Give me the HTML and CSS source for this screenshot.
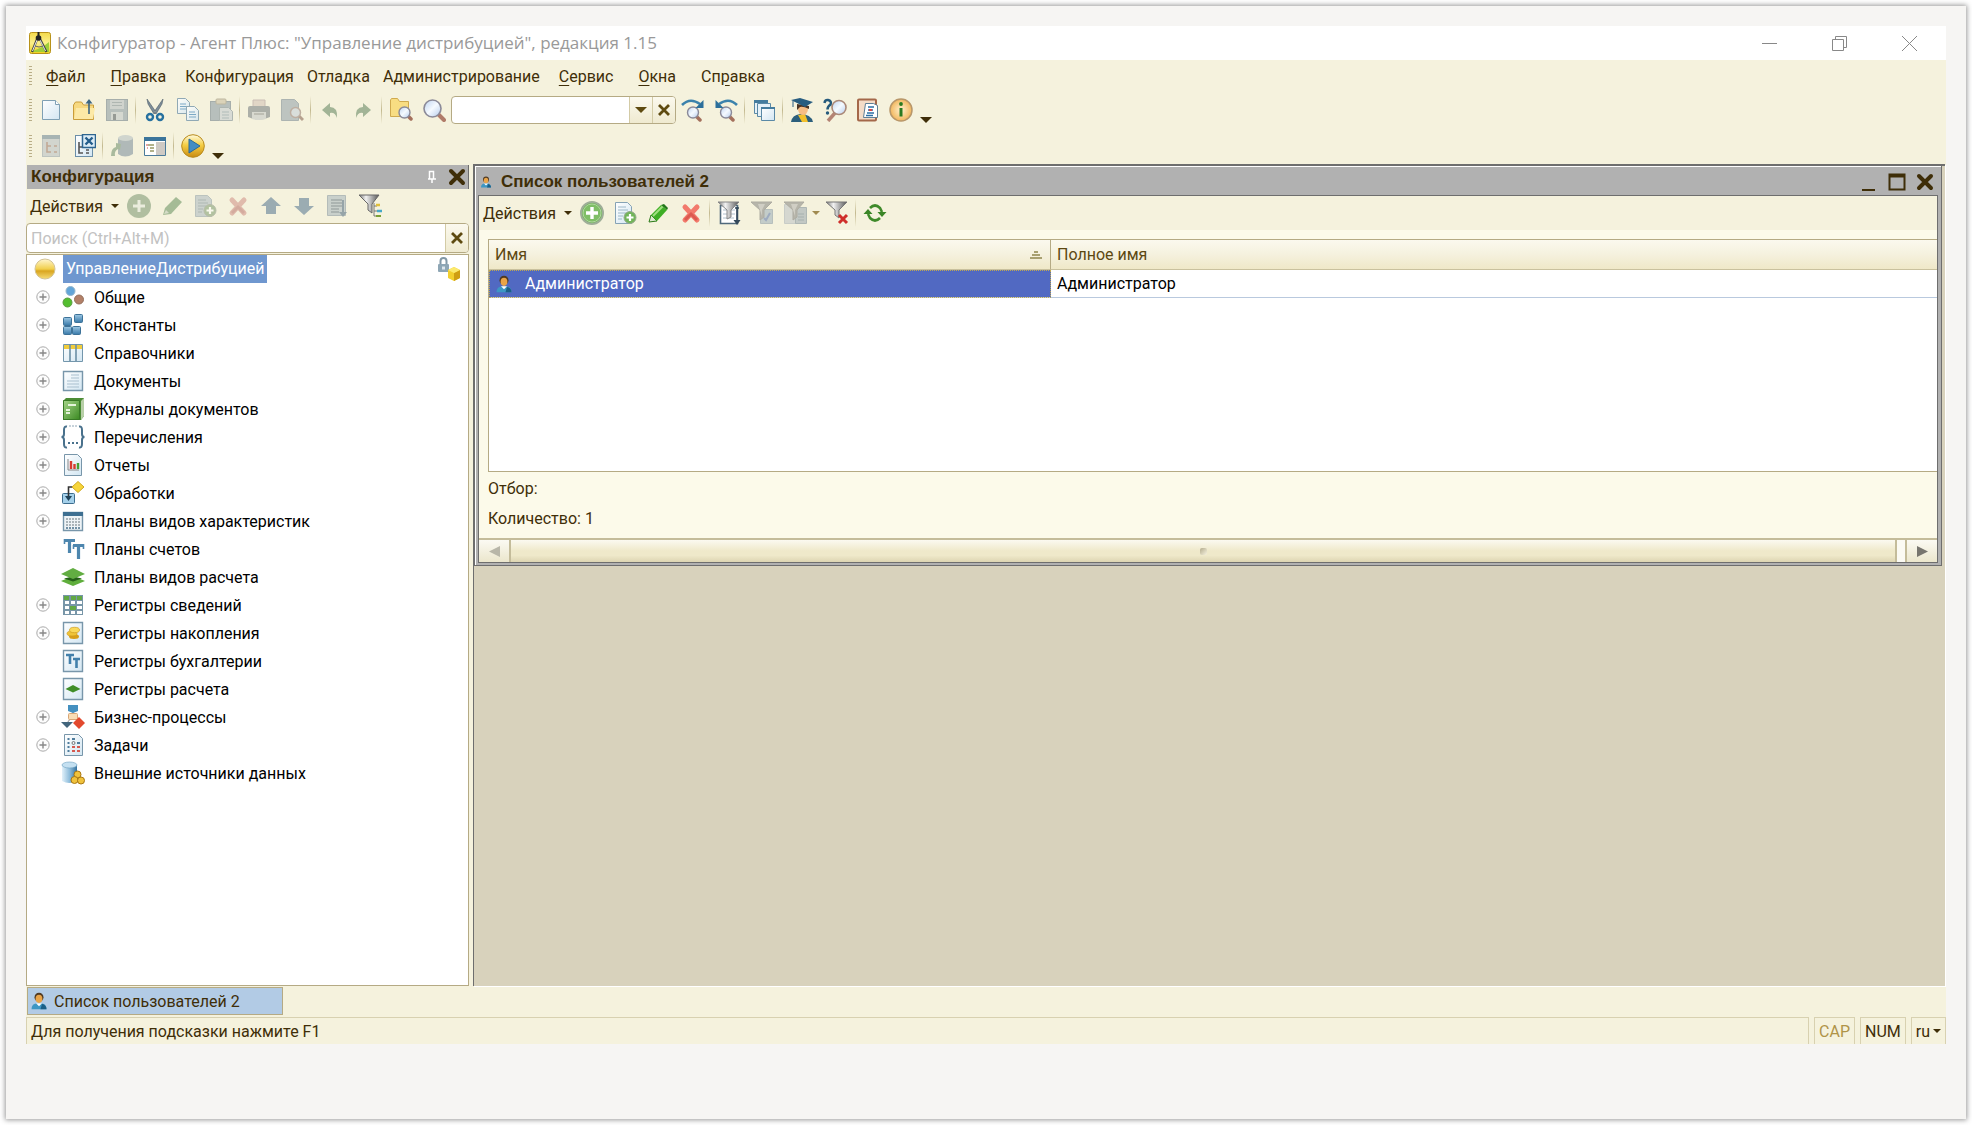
FILE: index.html
```html
<!DOCTYPE html>
<html lang="ru">
<head>
<meta charset="utf-8">
<meta name="viewport" content="width=device-width, initial-scale=1">
<title>Конфигуратор - Агент Плюс: "Управление дистрибуцией", редакция 1.15</title>
<link rel="stylesheet" href="styles.css">
</head>
<body>
<svg class="sprite" aria-hidden="true">
<defs>
<linearGradient id="gold" x1="0" y1="0" x2="0" y2="1"><stop offset="0" stop-color="#fffbe0"/><stop offset=".45" stop-color="#f5cf45"/><stop offset="1" stop-color="#c98b12"/></linearGradient>
<linearGradient id="appbg" x1="0" y1="0" x2="0" y2="1"><stop offset="0" stop-color="#f3d94a"/><stop offset=".5" stop-color="#fbf08a"/><stop offset="1" stop-color="#f0d020"/></linearGradient>
<linearGradient id="ball" x1="0" y1="0" x2="0" y2="1"><stop offset="0" stop-color="#fff6d0"/><stop offset=".5" stop-color="#f1cf4c"/><stop offset=".6" stop-color="#d9a520"/><stop offset="1" stop-color="#f6dc75"/></linearGradient>
<linearGradient id="page" x1="0" y1="0" x2="1" y2="1"><stop offset="0" stop-color="#fff"/><stop offset="1" stop-color="#d3e6f2"/></linearGradient>
<linearGradient id="blue" x1="0" y1="0" x2="0" y2="1"><stop offset="0" stop-color="#9dc8e4"/><stop offset="1" stop-color="#3778a8"/></linearGradient>
<linearGradient id="cyl" x1="0" y1="0" x2="1" y2="0"><stop offset="0" stop-color="#e2f1fa"/><stop offset=".5" stop-color="#8fbddb"/><stop offset="1" stop-color="#34729f"/></linearGradient>
<linearGradient id="green" x1="0" y1="0" x2="1" y2="1"><stop offset="0" stop-color="#a5d488"/><stop offset="1" stop-color="#3b8a22"/></linearGradient>
<linearGradient id="metal" x1="0" y1="0" x2="1" y2="0"><stop offset="0" stop-color="#777"/><stop offset=".35" stop-color="#f2f2f2"/><stop offset="1" stop-color="#555"/></linearGradient>
<linearGradient id="lens" x1="0" y1="0" x2="1" y2="1"><stop offset="0" stop-color="#bcd2f0"/><stop offset=".5" stop-color="#f5faff"/><stop offset="1" stop-color="#b4cbec"/></linearGradient>
<radialGradient id="info"><stop offset="0" stop-color="#fff2cf"/><stop offset="1" stop-color="#f2b65c"/></radialGradient>
</defs>
<symbol id="app" viewBox="0 0 24 24"><rect x="1.500" y="1.500" width="21" height="21" rx="2" fill="url(#appbg)" stroke="#b8921a"/><path d="M3 20C9 19 15 16 21 11v10H3z" fill="#9fce3a"/><path d="M9.500 7L4 21M11.500 7l7 14" stroke="#444" stroke-width="2.200"/><path d="M9.500 8L4.500 20M12 9l5.500 11" stroke="#eee"/><path d="M7 15q4 2 8 0" stroke="#666" fill="none"/><path d="M10.500 1v5" stroke="#222" stroke-width="2"/><circle cx="10.500" cy="7" r="2.800" fill="#222"/></symbol>
<symbol id="new" viewBox="0 0 24 24"><path d="M3.500 2.500h13l4 4v15h-17z" fill="url(#page)" stroke="#7fa0b4"/><path d="M16.500 2.500v4h4" fill="#fff" stroke="#7fa0b4"/></symbol>
<symbol id="open" viewBox="0 0 24 24"><path d="M1.500 21.500V7l2-3h6l2 3h10v14.500z" fill="#f7d980" stroke="#c99d3a"/><path d="M2 21L4 10h19l-2 11z" fill="#fce9a6"/><path d="M17 16V3" stroke="#3b6580" stroke-width="1.600"/><path d="M13.500 5.500L17 1l3.500 4.500z" fill="#3b6580"/></symbol>
<symbol id="save" viewBox="0 0 24 24"><rect x="1.500" y="1.500" width="21" height="21" fill="#6f8ea4" stroke="#4d6d85"/><path d="M5 2h14v9H5z" fill="#a4b6c4"/><path d="M7 4.500h10M7 7.500h10" stroke="#5f7b90"/><path d="M6 14h12v8H6z" fill="#b0bec8"/><path d="M8 16h3v6H8z" fill="#345"/></symbol>
<symbol id="cut" viewBox="0 0 24 24"><path d="M4 1l9 13-2 2L5 6zM20 1l-9 13 2 2 6-10z" fill="#7e8d98" stroke="#4e5e6a" stroke-width=".600"/><circle cx="7" cy="19" r="3" fill="none" stroke="#27719f" stroke-width="2.400"/><circle cx="17" cy="19" r="3" fill="none" stroke="#27719f" stroke-width="2.400"/></symbol>
<symbol id="copy" viewBox="0 0 24 24"><path d="M1.500.5h8l4 4v11h-12z" fill="url(#page)" stroke="#7797ac"/><path d="M4 6h6M4 8.500h7M4 11h7" stroke="#5f97c0"/><path d="M10.500 8.500h8l4 4v10h-12z" fill="url(#page)" stroke="#7797ac"/><path d="M13 14h6M13 16.500h7M13 19h7" stroke="#5f97c0"/></symbol>
<symbol id="paste" viewBox="0 0 24 24"><rect x="1.500" y="3.500" width="20" height="19" fill="#6f8ea6" stroke="#4c6c85"/><rect x="7" y="1" width="10" height="5" rx="1" fill="#c9b37f" stroke="#8b7a50"/><path d="M10.500 9.500h9l4 4v9h-13z" fill="#b5c6d3" stroke="#5d7b90"/><path d="M13 14h7M13 17h7M13 20h7" stroke="#5f87a5"/></symbol>
<symbol id="print" viewBox="0 0 24 24"><path d="M6 2h12v8H6z" fill="#d8b8a4" stroke="#a88"/><path d="M1 10q0-2 2-2h18q2 0 2 2v9q-11 5-22 0z" fill="#5f6d78"/><path d="M5 14h14v7q-7 2-14 0z" fill="#b8c0c5"/><path d="M7 16h10" stroke="#555"/></symbol>
<symbol id="preview" viewBox="0 0 24 24"><path d="M1.500 1.500h13l4 4v17h-17z" fill="#7c98ac" stroke="#587890"/><path d="M19 18l4 4" stroke="#8a4a30" stroke-width="3"/><circle cx="15.500" cy="14.500" r="5" fill="#b5cbe2" stroke="#96685c" stroke-width="1.500"/></symbol>
<symbol id="undo" viewBox="0 0 24 24"><path d="M4 12l8-7v4q8 0 7 11-2-6-7-5v4z" fill="#3c7d3c"/></symbol>
<symbol id="redo" viewBox="0 0 24 24"><path d="M20 12l-8-7v4q-8 0-7 11 2-6 7-5v4z" fill="#3c7d3c"/></symbol>
<symbol id="mag" viewBox="0 0 24 24"><path d="M16 16l6 6" stroke="#b07b68" stroke-width="4" stroke-linecap="round"/><circle cx="10.500" cy="10.500" r="8.500" fill="url(#lens)" stroke="#8b8a98" stroke-width="1.600"/></symbol>
<symbol id="findfile" viewBox="0 0 24 24"><path d="M1.500 18.500V2l1-1.500h6l2 3h9v15z" fill="#f8dd82" stroke="#d0aa4e"/><path d="M19 18l3 3" stroke="#a4705c" stroke-width="3.500" stroke-linecap="round"/><circle cx="15.500" cy="14.500" r="5.500" fill="url(#lens)" stroke="#8b8a98" stroke-width="1.400"/></symbol>
<symbol id="next" viewBox="0 0 24 24"><path d="M15 18l4 4" stroke="#a4705c" stroke-width="3.500" stroke-linecap="round"/><circle cx="12" cy="14.500" r="5.500" fill="url(#lens)" stroke="#8b8a98" stroke-width="1.400"/><path d="M1 7Q9-1 19 6" fill="none" stroke="#3b82ac" stroke-width="2.600"/><path d="M22.500 2v8h-8z" fill="#2c6f9b"/></symbol>
<symbol id="prev" viewBox="0 0 24 24"><path d="M15 18l4 4" stroke="#a4705c" stroke-width="3.500" stroke-linecap="round"/><circle cx="12" cy="14.500" r="5.500" fill="url(#lens)" stroke="#8b8a98" stroke-width="1.400"/><path d="M23 7Q15-1 5 6" fill="none" stroke="#3b82ac" stroke-width="2.600"/><path d="M1.500 2v8h8z" fill="#2c6f9b"/></symbol>
<symbol id="wins" viewBox="0 0 24 24"><g fill="#e6f1f8" stroke="#5a89a6"><path d="M2.500 2.500h13v13h-13z"/><path d="M5.500 5.500h13v13h-13z"/><path d="M9.500 9.500h13v13h-13z" fill="url(#page)"/></g><path d="M2 2h14v3H2zM9 9h14v2H9z" fill="#457c9e"/></symbol>
<symbol id="grad" viewBox="0 0 24 24"><path d="M1 24q1-7 9-8 11 0 13 8z" fill="#2c5f7c"/><path d="M8 17l4 7h6l-3-8z" fill="#f2c02c"/><ellipse cx="13" cy="11" rx="5" ry="6" fill="#f6bd85"/><path d="M7 12V6l12 2v3q-6-3-9-2z" fill="#4a3425"/><path d="M1 2L10 0l13 4-8 5z" fill="#285d80"/><path d="M3 3v6" stroke="#285d80"/></symbol>
<symbol id="helpfind" viewBox="0 0 24 24"><path d="M12 15l-7 8" stroke="#b48474" stroke-width="3.500"/><circle cx="16" cy="9.500" r="7" fill="url(#lens)" stroke="#aa8878" stroke-width="1.600"/><path d="M1.500 5Q2 1.500 5 2q4 1 2.500 4.500-3 2-3 5" fill="none" stroke="#255a7c" stroke-width="2.500"/><circle cx="4.500" cy="15" r="1.700" fill="#255a7c"/></symbol>
<symbol id="book" viewBox="0 0 24 24"><rect x="2" y="1.500" width="18" height="21" rx="1" fill="#f4dcc8" stroke="#a4684a" stroke-width="2"/><path d="M9.500 5.500h8l4 2v12h-14z" fill="#fff" stroke="#5f7f95"/><path d="M12 9h6M12 12h5M11 15h7M10 17.500h7" stroke="#2d6fa5" stroke-width="1.500"/><path d="M13 12h3" stroke="#d44" stroke-width="2"/></symbol>
<symbol id="info-i" viewBox="0 0 24 24"><circle cx="12" cy="12" r="11" fill="url(#info)" stroke="#b8976a" stroke-width="1.500"/><path d="M12 10v8.500" stroke="#2b7a20" stroke-width="3" fill="none"/><circle cx="12" cy="6" r="1.900" fill="#2b7a20"/></symbol>
<symbol id="cfg" viewBox="0 0 24 24"><rect x="3.500" y="1.500" width="17" height="21" fill="#a9b9c4" stroke="#7c98aa"/><path d="M3 1h18v4H3z" fill="#4a7898"/><path d="M8 8v10h4M8 12h4M15 12h3M15 18h3" stroke="#a85a3a" stroke-width="1.600" fill="none"/></symbol>
<symbol id="cfgx" viewBox="0 0 24 24"><rect x="3.500" y="1.500" width="17" height="21" fill="url(#page)" stroke="#6c8fa8"/><path d="M7 8v11h4M7 13h4M14 16h3M14 19h3" stroke="#555" stroke-width="1.600" fill="none"/><path d="M10.500.5h13v13h-13z" fill="#dcecf6" stroke="#2e6590" stroke-width="1.500"/><path d="M13.500 3.500l7 7M20.500 3.500l-7 7" stroke="#235d8b" stroke-width="2.400"/></symbol>
<symbol id="db" viewBox="0 0 24 24"><path d="M8 4v16q7 5 15 0V4z" fill="#5e83a0"/><ellipse cx="15.500" cy="4" rx="7.500" ry="3" fill="#a5b9c6"/><path d="M1 22q0-8 5-9V9l5 1-1 6-2-1q-4 2-3 7z" fill="#4b8a4b"/></symbol>
<symbol id="panel" viewBox="0 0 24 24"><path d="M1.500 3.500h21v18h-21z" fill="#fff" stroke="#4b7b9b"/><path d="M1 3h22v4H1z" fill="#3b749b"/><path d="M13 8h9v13h-9z" fill="#cfcac4"/><path d="M5 11h6M7 14h4M7 17h4" stroke="#996" stroke-width="1.500"/><path d="M3 11h2M4 14h1" stroke="#c44"/></symbol>
<symbol id="play" viewBox="0 0 24 24"><circle cx="12" cy="12" r="11.300" fill="url(#gold)" stroke="#b88a1c"/><path d="M8 5l11 7-11 7z" fill="#438dc4" stroke="#2a6a99"/></symbol>
<symbol id="plus" viewBox="0 0 24 24"><circle cx="12" cy="12" r="11" fill="#6db356" stroke="#9fae98" stroke-width="2"/><circle cx="12" cy="12" r="9" fill="#7fbe66" stroke="#c0e0b0" stroke-width=".800"/><path d="M12 6v12M6 12h12" stroke="#fff" stroke-width="3.400"/></symbol>
<symbol id="pen" viewBox="0 0 24 24"><path d="M3 21l2-7 6 6z" fill="#dfe8d0" stroke="#2b7a18"/><path d="M5 14L15 4l6 5-10 11z" fill="#3fae25"/><path d="M7 15L17 5" stroke="#a0e080" stroke-width="2"/><path d="M15 4l3-1 4 4-1 2z" fill="#23781a"/></symbol>
<symbol id="pen-off" viewBox="0 0 24 24"><path d="M3 21l2-7L16 3l6 5-11 12z" fill="#3f8e35"/><path d="M4 20l2-4 3 3z" fill="#b0c8a8"/></symbol>
<symbol id="plus-off" viewBox="0 0 24 24"><circle cx="12" cy="12" r="12" fill="#5d9150"/><path d="M12 6v12M6 12h12" stroke="#dce8d8" stroke-width="3"/></symbol>
<symbol id="addcopy" viewBox="0 0 24 24"><path d="M2.500 1.500h12l4 4v17h-16z" fill="url(#page)" stroke="#86a3b5"/><path d="M5 6h8M5 9h10M5 12h8M5 15h5M5 18h4" stroke="#9db8c8"/><circle cx="17" cy="16.500" r="6" fill="#72b559" stroke="#94a88c"/><path d="M17 13v7M13.500 16.500h7" stroke="#fff" stroke-width="2.200"/></symbol>
<symbol id="addcopy-off" viewBox="0 0 24 24"><path d="M2.500 1.500h12l4 4v17h-16z" fill="#9ab4c6" stroke="#7895a8"/><path d="M5 6h8M5 9h10M5 12h8M5 15h5M5 18h4" stroke="#5d7e94"/><circle cx="17" cy="16.500" r="6" fill="#5f9a4a" stroke="#748a6c"/><path d="M17 13v7M13.500 16.500h7" stroke="#fff" stroke-width="2.200"/></symbol>
<symbol id="del" viewBox="0 0 24 24"><path d="M6 6l12 13M18 6L6 19" stroke="#f27a6c" stroke-width="5" stroke-linecap="round"/><path d="M6 19l6-6 6 6" stroke="#dc5a50" fill="none" stroke-width="3"/></symbol>
<symbol id="up" viewBox="0 0 24 24"><path d="M12 3l10 9h-5v8H7v-8H2z" fill="#2d6aa0"/></symbol>
<symbol id="down" viewBox="0 0 24 24"><path d="M12 21L2 12h5V4h10v8h5z" fill="#2d6aa0"/></symbol>
<symbol id="sortl" viewBox="0 0 24 24"><path d="M2.500 1.500h18v20h-18z" fill="#94afc2" stroke="#6788a0"/><path d="M6 6h11M6 9h11M6 12h11M6 15h8M6 18h8" stroke="#44687f" stroke-width="1.500"/><path d="M18 6v12" stroke="#245a88" stroke-width="2"/><path d="M14 18h8l-4 5z" fill="#245a88"/></symbol>
<symbol id="ftree" viewBox="0 0 24 24"><path d="M1 1h20l-7 9v9l-4-3v-6z" fill="url(#metal)" stroke="#666"/><path d="M16 9v13h3M16 12h3M16 17h3" stroke="#777" fill="none"/><path d="M18 11h4" stroke="#e0bf3a" stroke-width="2.500"/><path d="M19 17h5" stroke="#45a8c8" stroke-width="2.500"/><path d="M18 22h5" stroke="#7a9f35" stroke-width="2"/></symbol>
<symbol id="fsort" viewBox="0 0 24 24"><path d="M3.500 4.500h17v18h-17z" fill="#fff" stroke="#50697b" stroke-width="1.600"/><path d="M6 9h12M6 13h12M6 17h11" stroke="#b0c0cc"/><path d="M1 1h21l-8 8v7l-4 2V9z" fill="url(#metal)" stroke="#888"/><path d="M20 6v14M18 7h4" stroke="#33485a" stroke-width="1.600"/><path d="M16.500 19h7l-3.500 5z" fill="#33485a"/></symbol>
<symbol id="fcheck" viewBox="0 0 24 24"><path d="M10.500 8.500h12v14h-12z" fill="#87a7c0" stroke="#6d8fa8"/><path d="M14 17l2 2 4-7" stroke="#36c" stroke-width="2" fill="none"/><path d="M1 1h21l-8 8v7l-4 3V9z" fill="#777" stroke="#666"/><path d="M8 3h7l-3 6v6z" fill="#aaa"/></symbol>
<symbol id="flist" viewBox="0 0 24 24"><path d="M1.500 3.500h13v19h-13z" fill="#b0bcc8" stroke="#94a8b8"/><path d="M12.500 6.500h11v16h-11z" fill="#86a0b4" stroke="#5c7f98"/><path d="M15 13h6M15 16h6M15 19h6" stroke="#48708e"/><path d="M1 1h20l-7 8v7l-4 3V9z" fill="#777" stroke="#666"/><path d="M8 3h7l-3 6v6z" fill="#aaa"/></symbol>
<symbol id="fclear" viewBox="0 0 24 24"><path d="M1 1h21l-8 8v8l-4-3V9z" fill="url(#metal)" stroke="#777"/><path d="M14 14l8 8M22 14l-8 8" stroke="#cf2f2a" stroke-width="3"/></symbol>
<symbol id="refresh" viewBox="0 0 24 24"><path d="M7 7q5-5 10 0l2 4M17 17q-5 5-10 0l-2-4" fill="none" stroke="#3f8a2a" stroke-width="2.600"/><path d="M14.500 11h9L19 16zM.5 13h9L5 8z" fill="#3a8526"/></symbol>
<symbol id="user" viewBox="0 0 24 24"><path d="M2 23q0-8 8-8h4q8 0 8 8z" fill="#3d97c4"/><path d="M14 23l2-7q6 1 6 7z" fill="#1b5f86"/><path d="M8 15l4 4 4-4z" fill="#fff"/><circle cx="12" cy="7" r="6" fill="#503a22"/><ellipse cx="12" cy="9" rx="4.500" ry="5.500" fill="#e9a448"/></symbol>
<symbol id="root" viewBox="0 0 24 24"><circle cx="12" cy="12" r="10" fill="url(#ball)" stroke="#d3c394"/></symbol>
<symbol id="lock" viewBox="0 0 24 24"><path d="M4.500 8V4q0-3 3-3t3 3v4" fill="none" stroke="#8298a6" stroke-width="2"/><rect x="2" y="7" width="11" height="8" rx="1" fill="#8ea6b5"/><path d="M6 9.500h3v3H6z" fill="#dde6ec"/><path d="M12 13l6-3 6 3v8l-6 3-6-3z" fill="#f2cf2e"/><path d="M18 16l6-3v8l-6 3z" fill="#cf9e12"/><path d="M12 13l6-3 6 3-6 3z" fill="#fbe96e"/></symbol>
<symbol id="exp" viewBox="0 0 14 14"><circle cx="7" cy="7" r="6.200" fill="#fcfcfc" stroke="#aaa"/><path d="M7 3.500v7M3.500 7h7" stroke="#888" stroke-width="1.400"/></symbol>
<symbol id="common" viewBox="0 0 24 24"><circle cx="9.500" cy="6" r="4.500" fill="#62a5d8" stroke="#92b4cc"/><circle cx="6.500" cy="17.500" r="4.500" fill="#53be2f" stroke="#5b9b40"/><circle cx="18" cy="14.500" r="4.500" fill="#b38068" stroke="#94705c"/></symbol>
<symbol id="const" viewBox="0 0 24 24"><g fill="url(#blue)" stroke="#3d7298"><rect x="2.500" y="4.500" width="8" height="8" rx="1"/><rect x="13.500" y="1.500" width="8" height="8" rx="1"/><rect x="2.500" y="13.500" width="8" height="8" rx="1"/><rect x="11.500" y="13.500" width="8" height="8" rx="1"/></g></symbol>
<symbol id="refs" viewBox="0 0 24 24"><path d="M2.500 3.500h19v17h-19z" fill="url(#page)" stroke="#7396ac"/><path d="M3 4h18v4H3z" fill="#f0cc3c"/><path d="M9 3v17M15 3v17" stroke="#6c8fa5" stroke-width="1.600"/></symbol>
<symbol id="doc" viewBox="0 0 24 24"><path d="M2.500 2.500h19v19h-19z" fill="url(#page)" stroke="#7896aa" stroke-width="1.400"/><path d="M10 6h8M10 9h8M6 12h12M6 15h12M6 18h12" stroke="#a9bfce"/></symbol>
<symbol id="journal" viewBox="0 0 24 24"><path d="M5 1h18v18l-3 4H2V4z" fill="#4c8c35"/><path d="M20 4l3-3v18l-3 4z" fill="#b8cfa8"/><path d="M2.500 3.500h16v19h-16z" fill="url(#green)" stroke="#387a25"/><path d="M7 8h8M5 13h4M5 16h4" stroke="#e4f4da" stroke-width="2"/></symbol>
<symbol id="enum" viewBox="0 0 24 24"><path d="M6 1.500Q3 1 3 5v4q0 3-2.500 3 2.500 0 2.500 3v4q0 4 3 3.500M18 1.500q3-.5 3 3.500v4q0 3 2.500 3-2.500 0-2.500 3v4q0 4-3 3.500" fill="none" stroke="#49718c" stroke-width="2"/><path d="M8 1h8" stroke="#8ea6b6" stroke-dasharray="2 1"/><path d="M7 18h2M11 18h2M15 18h2" stroke="#49718c" stroke-width="2"/></symbol>
<symbol id="report" viewBox="0 0 24 24"><path d="M3.500 1.500h13l4 4v17h-17z" fill="url(#page)" stroke="#7896aa"/><path d="M7 6v11h11" fill="none" stroke="#888"/><path d="M10 16V8M13.500 16v-5" stroke="#d83a30" stroke-width="2.400"/><path d="M17 16v-6" stroke="#47a035" stroke-width="2.400"/></symbol>
<symbol id="proc" viewBox="0 0 24 24"><rect x="1.500" y="12.500" width="12" height="10" rx="1" fill="#a4d0ea" stroke="#3d6d8e"/><path d="M7.500 18V6H12" fill="none" stroke="#333" stroke-width="1.600"/><path d="M4 15h7l-3.500 5z" fill="#1f4258"/><path d="M17 .5l6 5.500-6 5.500L11 6z" fill="#f7d53b" stroke="#cfa922"/></symbol>
<symbol id="pvh" viewBox="0 0 24 24"><path d="M2.500 3.500h19v18h-19z" fill="#eef3f6" stroke="#7896aa" stroke-width="1.400"/><path d="M2 3h20v4H2z" fill="#3e6f91"/><path d="M6 9v8M9 9v8M12 9v8M15 9v8M18 9v8" stroke="#8f9aa0" stroke-width="1.400" stroke-dasharray="2 1"/><path d="M5 19h14" stroke="#49718c" stroke-width="1.500" stroke-dasharray="2 1"/></symbol>
<symbol id="acc" viewBox="0 0 24 24"><path d="M3 3.500h11M8.500 3v13M12 8.500h11M17.500 8v14" stroke="#4d86ae" stroke-width="3.200" fill="none"/><path d="M3.500 2v5M22.500 7v5M12.500 8v4" stroke="#4d86ae" stroke-width="1.600"/></symbol>
<symbol id="layers" viewBox="0 0 24 24"><path d="M0 16l12-5 12 5-12 5z" fill="#5fae3c"/><path d="M3 13.500l9-2 9 2-9 3z" fill="#255f18"/><path d="M0 9l12-6 12 6-12 5z" fill="#62ad42"/></symbol>
<symbol id="rinfo" viewBox="0 0 24 24"><path d="M2 2h20v20H2z" fill="#7896a8"/><path d="M4 8h4v3H4zM10 8h4v3h-4zM16 8h5v3h-5zM4 13h4v3H4zM16 13h5v3h-5zM4 18h4v3H4zM10 18h4v3h-4zM16 18h5v3h-5z" fill="#fff"/><path d="M3 3h5v4H3zM10 3h5v4h-5zM16 3h5v4h-5zM9 13h6v4H9z" fill="#62a844"/></symbol>
<symbol id="racc" viewBox="0 0 24 24"><path d="M2.500 1.500h19v21h-19z" fill="url(#page)" stroke="#7896aa" stroke-width="1.400"/><ellipse cx="13" cy="15.500" rx="5" ry="2.500" fill="#d89e18"/><ellipse cx="11" cy="12.500" rx="5" ry="2.500" fill="#f0c437" stroke="#cf9b20" stroke-width=".700"/><ellipse cx="13.500" cy="9" rx="5" ry="2.700" fill="#f9d95a" stroke="#cf9b20" stroke-width=".700"/></symbol>
<symbol id="rbuh" viewBox="0 0 24 24"><path d="M2.500 1.500h19v21h-19z" fill="url(#page)" stroke="#7896aa" stroke-width="1.400"/><path d="M5 6h8M9 6v9M12 10h7M15.500 10v9" stroke="#4380ab" stroke-width="2.600" fill="none"/></symbol>
<symbol id="rcalc" viewBox="0 0 24 24"><path d="M2.500 1.500h19v21h-19z" fill="url(#page)" stroke="#7896aa" stroke-width="1.400"/><path d="M4.500 12l7.500-4 7.500 4-7.500 3.500z" fill="#3f8e28"/></symbol>
<symbol id="bp" viewBox="0 0 24 24"><path d="M12 6v7M6 18l4-5h5l3 5" stroke="#888" fill="none"/><path d="M7 0h10v6l-5 2-5-2z" fill="#4490c0"/><rect x="7.500" y="8.500" width="9" height="6" rx="1" fill="#f9ddb5" stroke="#d8a676"/><path d="M0 17h12l-6 6z" fill="#42657c"/><path d="M18 12l6 6-6 6-6-6z" fill="#e2492e"/></symbol>
<symbol id="task" viewBox="0 0 24 24"><path d="M3.500 1.500h14l4 4v17h-18z" fill="url(#page)" stroke="#7896aa"/><path d="M6.500 6h2M6.500 10h2M6.500 14h2M6.500 18h2M16 10h3M11 6h3" stroke="#4f7c9c" stroke-width="2"/><path d="M11 14h3M11 18h3M16 18h3M16 14h3" stroke="#d65a50" stroke-width="2"/><circle cx="12.500" cy="10" r="1.500" fill="none" stroke="#777"/></symbol>
<symbol id="ext" viewBox="0 0 24 24"><path d="M1 4v16q7 4 15 0V4z" fill="url(#cyl)"/><ellipse cx="8.500" cy="4" rx="7.500" ry="3" fill="#c4e0f1" stroke="#6b9fc0" stroke-width=".600"/><g fill="#f0c23c" stroke="#a97712"><circle cx="16.500" cy="13.500" r="3.500"/><circle cx="13.500" cy="19" r="3.500"/><circle cx="20" cy="19.500" r="3.500"/></g></symbol>
<symbol id="x" viewBox="0 0 18 18"><path d="M3 3l12 12M15 3L3 15" stroke="currentColor" stroke-width="4" stroke-linecap="round"/></symbol>
<symbol id="sx" viewBox="0 0 14 14"><path d="M2 2l10 10M12 2L2 12" stroke="currentColor" stroke-width="2.800"/></symbol>
<symbol id="tri" viewBox="0 0 12 6"><path d="M0 0h12L6 6z" fill="currentColor"/></symbol>
</svg>

<main class="card">
<div class="app">
  <header class="titlebar">
    <svg class="ic"><use href="#app"/></svg>
    <h1>Конфигуратор - Агент Плюс: "Управление дистрибуцией", редакция 1.15</h1>
    <div class="winbtns">
      <button aria-label="Свернуть"><svg width="15" height="15"><path d="M0 7.500h15" stroke="#888"/></svg></button>
      <button aria-label="Восстановить"><svg width="15" height="15" fill="none" stroke="#888"><path d="M.5 3.500h11v11H.5zM3.500 3.500v-3h11v11h-3"/></svg></button>
      <button aria-label="Закрыть"><svg width="15" height="15" stroke="#888"><path d="M0 0l15 15M15 0L0 15"/></svg></button>
    </div>
  </header>

  <nav class="menubar">
    <i class="grip"></i>
    <button class="key"><u>Ф</u>айл</button>
    <button class="key"><u>П</u>равка</button>
    <button>Конфигурация</button>
    <button>Отладка</button>
    <button>Администрирование</button>
    <button class="key"><u>С</u>ервис</button>
    <button class="key"><u>О</u>кна</button>
    <button class="key">Сп<u>р</u>авка</button>
  </nav>

  <div class="bar bar-main">
    <i class="grip"></i>
    <button class="tool" aria-label="Новый"><svg class="ic"><use href="#new"/></svg></button>
    <button class="tool" aria-label="Открыть"><svg class="ic"><use href="#open"/></svg></button>
    <button class="tool" disabled aria-label="Сохранить"><svg class="ic"><use href="#save"/></svg></button>
    <i class="sep"></i>
    <button class="tool" aria-label="Вырезать"><svg class="ic"><use href="#cut"/></svg></button>
    <button class="tool soft" aria-label="Копировать"><svg class="ic"><use href="#copy"/></svg></button>
    <button class="tool" disabled aria-label="Вставить"><svg class="ic"><use href="#paste"/></svg></button>
    <i class="sep"></i>
    <button class="tool" disabled aria-label="Печать"><svg class="ic"><use href="#print"/></svg></button>
    <button class="tool" disabled aria-label="Просмотр"><svg class="ic"><use href="#preview"/></svg></button>
    <i class="sep"></i>
    <button class="tool" disabled aria-label="Отменить"><svg class="ic"><use href="#undo"/></svg></button>
    <button class="tool" disabled aria-label="Вернуть"><svg class="ic"><use href="#redo"/></svg></button>
    <i class="sep"></i>
    <button class="tool" aria-label="Глобальный поиск"><svg class="ic"><use href="#findfile"/></svg></button>
    <button class="tool" aria-label="Найти"><svg class="ic"><use href="#mag"/></svg></button>
    <div class="field combo">
      <input type="text" aria-label="Строка поиска">
      <button aria-label="Список"><svg class="tri"><use href="#tri"/></svg></button>
      <button aria-label="Очистить"><svg class="sx"><use href="#sx"/></svg></button>
    </div>
    <button class="tool" aria-label="Найти следующий"><svg class="ic"><use href="#next"/></svg></button>
    <button class="tool" aria-label="Найти предыдущий"><svg class="ic"><use href="#prev"/></svg></button>
    <i class="sep"></i>
    <button class="tool" aria-label="Окна"><svg class="ic"><use href="#wins"/></svg></button>
    <i class="sep"></i>
    <button class="tool" aria-label="Синтакс-помощник"><svg class="ic"><use href="#grad"/></svg></button>
    <button class="tool" aria-label="Поиск в справке"><svg class="ic"><use href="#helpfind"/></svg></button>
    <button class="tool" aria-label="Справка"><svg class="ic"><use href="#book"/></svg></button>
    <button class="tool" aria-label="О программе"><svg class="ic"><use href="#info-i"/></svg></button>
    <button class="more" aria-label="Ещё"><svg class="tri"><use href="#tri"/></svg></button>
  </div>

  <div class="bar bar-second">
    <i class="grip"></i>
    <button class="tool" disabled aria-label="Открыть конфигурацию"><svg class="ic"><use href="#cfg"/></svg></button>
    <button class="tool" aria-label="Закрыть конфигурацию"><svg class="ic"><use href="#cfgx"/></svg></button>
    <i class="sep"></i>
    <button class="tool" disabled aria-label="Обновить базу данных"><svg class="ic"><use href="#db"/></svg></button>
    <button class="tool" aria-label="Окно конфигурации"><svg class="ic"><use href="#panel"/></svg></button>
    <i class="sep"></i>
    <button class="tool" aria-label="Начать отладку"><svg class="ic"><use href="#play"/></svg></button>
    <button class="more" aria-label="Ещё"><svg class="tri"><use href="#tri"/></svg></button>
  </div>

  <div class="work">
    <aside class="side">
      <div class="side-head">
        <h2>Конфигурация</h2>
        <button aria-label="Закрепить"><svg width="8" height="14" fill="none" stroke="#fff" stroke-width="1.500"><path d="M1.500 9V1.500h4V9M0 9h8M4 9v4"/></svg></button>
        <button aria-label="Закрыть панель"><svg class="x"><use href="#x"/></svg></button>
      </div>
      <div class="bar bar-side">
        <button class="actions">Действия <svg class="tri small"><use href="#tri"/></svg></button>
        <button class="tool" disabled aria-label="Добавить"><svg class="ic"><use href="#plus-off"/></svg></button>
        <button class="tool" disabled aria-label="Изменить"><svg class="ic"><use href="#pen-off"/></svg></button>
        <button class="tool" disabled aria-label="Скопировать"><svg class="ic"><use href="#addcopy-off"/></svg></button>
        <button class="tool" disabled aria-label="Удалить"><svg class="ic"><use href="#del"/></svg></button>
        <button class="tool" disabled aria-label="Вверх"><svg class="ic"><use href="#up"/></svg></button>
        <button class="tool" disabled aria-label="Вниз"><svg class="ic"><use href="#down"/></svg></button>
        <button class="tool" disabled aria-label="Упорядочить"><svg class="ic"><use href="#sortl"/></svg></button>
        <button class="tool" aria-label="Отбор по подсистемам"><svg class="ic"><use href="#ftree"/></svg></button>
      </div>
      <div class="field search">
        <input type="text" placeholder="Поиск (Ctrl+Alt+M)" aria-label="Поиск">
        <button aria-label="Очистить"><svg class="sx"><use href="#sx"/></svg></button>
      </div>
      <ul class="tree">
        <li class="root"><svg class="ic"><use href="#root"/></svg><span>УправлениеДистрибуцией</span><svg class="ic lock"><use href="#lock"/></svg></li>
        <li><button aria-label="Развернуть"><svg class="exp"><use href="#exp"/></svg></button><svg class="ic"><use href="#common"/></svg>Общие</li>
        <li><button aria-label="Развернуть"><svg class="exp"><use href="#exp"/></svg></button><svg class="ic"><use href="#const"/></svg>Константы</li>
        <li><button aria-label="Развернуть"><svg class="exp"><use href="#exp"/></svg></button><svg class="ic"><use href="#refs"/></svg>Справочники</li>
        <li><button aria-label="Развернуть"><svg class="exp"><use href="#exp"/></svg></button><svg class="ic"><use href="#doc"/></svg>Документы</li>
        <li><button aria-label="Развернуть"><svg class="exp"><use href="#exp"/></svg></button><svg class="ic"><use href="#journal"/></svg>Журналы документов</li>
        <li><button aria-label="Развернуть"><svg class="exp"><use href="#exp"/></svg></button><svg class="ic"><use href="#enum"/></svg>Перечисления</li>
        <li><button aria-label="Развернуть"><svg class="exp"><use href="#exp"/></svg></button><svg class="ic"><use href="#report"/></svg>Отчеты</li>
        <li><button aria-label="Развернуть"><svg class="exp"><use href="#exp"/></svg></button><svg class="ic"><use href="#proc"/></svg>Обработки</li>
        <li><button aria-label="Развернуть"><svg class="exp"><use href="#exp"/></svg></button><svg class="ic"><use href="#pvh"/></svg>Планы видов характеристик</li>
        <li class="leaf"><svg class="ic"><use href="#acc"/></svg>Планы счетов</li>
        <li class="leaf"><svg class="ic"><use href="#layers"/></svg>Планы видов расчета</li>
        <li><button aria-label="Развернуть"><svg class="exp"><use href="#exp"/></svg></button><svg class="ic"><use href="#rinfo"/></svg>Регистры сведений</li>
        <li><button aria-label="Развернуть"><svg class="exp"><use href="#exp"/></svg></button><svg class="ic"><use href="#racc"/></svg>Регистры накопления</li>
        <li class="leaf"><svg class="ic"><use href="#rbuh"/></svg>Регистры бухгалтерии</li>
        <li class="leaf"><svg class="ic"><use href="#rcalc"/></svg>Регистры расчета</li>
        <li><button aria-label="Развернуть"><svg class="exp"><use href="#exp"/></svg></button><svg class="ic"><use href="#bp"/></svg>Бизнес-процессы</li>
        <li><button aria-label="Развернуть"><svg class="exp"><use href="#exp"/></svg></button><svg class="ic"><use href="#task"/></svg>Задачи</li>
        <li class="leaf"><svg class="ic"><use href="#ext"/></svg>Внешние источники данных</li>
      </ul>
    </aside>

    <div class="mdi">
      <section class="child">
        <div class="child-head">
          <svg class="user-small"><use href="#user"/></svg>
          <h2>Список пользователей 2</h2>
          <button aria-label="Свернуть окно"><svg width="18" height="18"><path d="M2 17h13" stroke="#3f2e08" stroke-width="2"/></svg></button>
          <button aria-label="Развернуть окно"><svg width="18" height="18" fill="none" stroke="#3f2e08"><path d="M1.500 1.500h15v15h-15z" stroke-width="2"/><path d="M1 3h16" stroke-width="3"/></svg></button>
          <button aria-label="Закрыть окно"><svg class="x"><use href="#x"/></svg></button>
        </div>
        <div class="child-body">
          <div class="bar bar-child">
            <button class="actions">Действия <svg class="tri small"><use href="#tri"/></svg></button>
            <button class="tool" aria-label="Добавить"><svg class="ic"><use href="#plus"/></svg></button>
            <button class="tool" aria-label="Скопировать"><svg class="ic"><use href="#addcopy"/></svg></button>
            <button class="tool" aria-label="Изменить"><svg class="ic"><use href="#pen"/></svg></button>
            <button class="tool" aria-label="Удалить"><svg class="ic"><use href="#del"/></svg></button>
            <i class="sep"></i>
            <button class="tool" aria-label="Отбор и сортировка"><svg class="ic"><use href="#fsort"/></svg></button>
            <button class="tool" disabled aria-label="Отбор по значению"><svg class="ic"><use href="#fcheck"/></svg></button>
            <button class="tool" disabled aria-label="История отборов"><svg class="ic"><use href="#flist"/></svg></button>
            <button class="drop" aria-label="Список отборов"><svg class="tri small"><use href="#tri"/></svg></button>
            <button class="tool" aria-label="Отключить отбор"><svg class="ic"><use href="#fclear"/></svg></button>
            <i class="sep"></i>
            <button class="tool" aria-label="Обновить"><svg class="ic"><use href="#refresh"/></svg></button>
          </div>
          <div class="grid">
            <table>
              <colgroup><col class="col-name"><col></colgroup>
              <thead><tr>
                <th><div class="sorted">Имя<svg width="12" height="8" stroke="#a8a070" stroke-width="2"><path d="M4 1h4M2 4h8M0 7h12"/></svg></div></th>
                <th>Полное имя</th>
              </tr></thead>
              <tbody><tr>
                <td class="sel"><div class="cell"><svg class="user"><use href="#user"/></svg>Администратор</div></td>
                <td>Администратор</td>
              </tr></tbody>
            </table>
          </div>
          <p>Отбор:</p>
          <p>Количество: 1</p>
          <div class="hscroll">
            <button disabled aria-label="Влево"><svg width="11" height="11"><path d="M11 0v11L0 5.500z" fill="#b8b6a8"/></svg></button>
            <div class="thumb"><i></i></div>
            <div class="rest"></div>
            <button aria-label="Вправо"><svg width="11" height="11"><path d="M0 0v11l11-5.500z" fill="#77756e"/></svg></button>
          </div>
        </div>
      </section>
    </div>
  </div>

  <div class="taskbar">
    <button><svg class="user"><use href="#user"/></svg>Список пользователей 2</button>
  </div>

  <footer class="status">
    <span class="hint">Для получения подсказки нажмите F1</span>
    <span class="off">CAP</span>
    <span>NUM</span>
    <button>ru<svg class="tri small"><use href="#tri"/></svg></button>
  </footer>
</div>
</main>
</body>
</html>
```
FILE: styles.css
```css
:root {
  --cream: #f5f2dd;
  --pale: #fcfaea;
  --line: #b5aa84;
  --ink: #3f2e08;
  --gray: #b1b1b1;
  --dark: #6e6e6e;
}

* { box-sizing: border-box; }

body {
  margin: 0;
  min-height: 100vh;
  padding: 6px;
  display: flex;
  background: #fff;
  color: var(--ink);
  font: 16px/21px Roboto, "Liberation Sans", Arial, sans-serif;
}

button, input {
  font: inherit;
  color: inherit;
  border: 0;
  padding: 0;
  margin: 0;
  background: none;
}

h1, h2, p, ul { margin: 0; padding: 0; }
h2 { font: bold 17px/20px "Liberation Sans", Arial, sans-serif; }
svg { display: block; flex: none; }

.sprite { position: absolute; width: 0; height: 0; }
.ic { width: 24px; height: 24px; }
.tri { width: 12px; height: 6px; }
.tri.small { width: 8px; height: 4px; }
.x { width: 18px; height: 18px; }
.sx { width: 14px; height: 14px; color: #5e4a10; }
.exp { width: 14px; height: 14px; }
.user { width: 18px; height: 20px; }
.user-small { width: 12px; height: 14px; }

.card {
  flex: 1;
  display: flex;
  padding: 20px 20px 75px;
  background: #f6f5f3;
  box-shadow: 0 0 5px 1px #999;
}

.app {
  flex: 1;
  min-width: 0;
  display: flex;
  flex-direction: column;
  background: var(--cream);
}

.titlebar {
  display: flex;
  align-items: center;
  height: 34px;
  padding: 0 2px;
  gap: 5px;
  background: #fff;
}
.titlebar h1 {
  flex: 1;
  font: 17px/24px "Open Sans", "Noto Sans", sans-serif;
  color: #999;
}
.winbtns { display: flex; }
.winbtns button {
  width: 70px;
  height: 34px;
  display: grid;
  place-items: center;
}

.grip {
  width: 3px;
  height: 23px;
  margin: 0 6px 0 3px;
  background: repeating-linear-gradient(#b9ae88 0 1px, transparent 1px 3px);
}

.menubar {
  display: flex;
  align-items: center;
  height: 32px;
  gap: 13px;
}
.menubar .grip { height: 20px; margin-right: -5px; }
.menubar .key { padding: 0 6px; }
.menubar u { text-underline-offset: 3px; }

.bar { display: flex; align-items: center; }
.bar-main { height: 36px; }
.bar-second { height: 36px; }
.tool { width: 33px; height: 28px; display: grid; place-items: center; }
.bar-main .tool:first-of-type, .bar-second .tool:first-of-type { margin-left: -4px; }
.tool:disabled .ic { filter: grayscale(40%) opacity(50%); }
.tool.soft .ic { opacity: .8; }
.sep {
  width: 1px;
  height: 28px;
  margin: 0 2px;
  background: linear-gradient(transparent, #c3b98f, transparent);
}
.more { width: 18px; height: 28px; display: grid; place-items: end center; padding-bottom: 1px; }

.field {
  display: flex;
  background: #fff;
  border: 1px solid var(--line);
  border-radius: 4px;
  overflow: hidden;
}
.field input { flex: 1; min-width: 0; padding: 0 4px; outline: 0; }
.field input::placeholder { color: #c2c2c2; opacity: 1; }
.field button {
  width: 23px;
  display: grid;
  place-items: center;
  border-left: 1px solid #d3cba6;
  background: linear-gradient(#fbf9ee, #efead0);
}
.combo { width: 225px; height: 28px; margin-left: 1px; }
.combo .tri { color: #5e4a10; width: 12px; }
.search { height: 30px; }

.work { flex: 1; display: flex; gap: 4px; padding-right: 1px; }

.side { width: 443px; flex: none; display: flex; flex-direction: column; }
.side-head {
  display: flex;
  align-items: center;
  gap: 12px;
  height: 24px;
  margin: 1px 0 0 1px;
  padding: 0 2px 0 4px;
  background: var(--gray);
  border-right: 1px solid var(--dark);
}
.side-head h2 { flex: 1; }
.bar-side { height: 34px; padding-left: 4px; }
.bar-side .actions { width: 92px; }
.actions { display: flex; align-items: center; gap: 8px; flex: none; }

.tree {
  flex: 1;
  margin-top: 1px;
  list-style: none;
  background: #fff;
  border: 1px solid var(--line);
  color: #000;
}
.tree li {
  display: flex;
  align-items: center;
  height: 28px;
  padding-left: 9px;
}
.tree li .ic { margin-right: 9px; }
.tree li button { width: 14px; margin-right: 11px; }
.tree .leaf { padding-left: 34px; }
.tree .root { padding: 0 8px 0 6px; }
.tree .root .ic { margin-right: 6px; }
.tree .root span {
  padding: 0 3px;
  line-height: 28px;
  background: #6f97cf;
  color: #fff;
}
.tree .root .lock { margin: 0 0 0 auto; }

.mdi {
  flex: 1;
  min-width: 0;
  padding-right: 3px;
  background: #d8d2bc;
  border: solid var(--dark);
  border-width: 2px 0 0 1px;
  box-shadow: 1px 1px #fff;
}

.child { padding: 0 3px 2px; background: var(--gray); border: 1px solid var(--dark); border-width: 0 1px 1px; box-shadow: inset 1px 1px #fff; }
.child-head { display: flex; align-items: center; gap: 9px; height: 29px; padding: 2px 4px 0 2px; }
.child-head h2 { flex: 1; }
.child-head button + button { margin-left: 1px; }
.child-body { background: var(--pale); border: 1px solid var(--dark); }
.bar-child { height: 34px; padding-left: 4px; background: var(--cream); }
.bar-child .actions { width: 92px; }
.drop { width: 9px; height: 28px; display: grid; place-items: center; color: #a08a50; }

.grid {
  height: 233px;
  margin: 9px 0 6px 9px;
  background: #fff;
  border: solid var(--line);
  border-width: 1px 0 1px 1px;
}
table { width: 100%; table-layout: fixed; border-collapse: separate; border-spacing: 0; }
.col-name { width: 562px; }
th {
  height: 30px;
  padding: 0 6px;
  text-align: left;
  font-weight: normal;
  color: #5c4812;
  background: linear-gradient(#fbf9ee, #f5f1de 50%, #efe8c8);
  border-bottom: 1px solid #c9c19e;
}
th:first-child { border-right: 1px solid var(--line); padding-right: 8px; }
td {
  height: 28px;
  padding: 0 6px;
  color: #000;
  border-bottom: 1px solid #b9c9de;
}
.sorted { display: flex; align-items: center; justify-content: space-between; }
td.sel {
  color: #fff;
  background: #5169c2;
  outline: 1px dotted #c0a850;
  outline-offset: -1px;
}
.cell { display: flex; align-items: center; gap: 12px; }

.child-body p { height: 30px; line-height: 22px; padding-left: 9px; }

.hscroll {
  display: flex;
  height: 24px;
  border-top: 2px solid #c4bc9a;
}
.hscroll button {
  width: 30px;
  display: grid;
  place-items: center;
  background: linear-gradient(#fbfaf3, #ebe6cc);
}
.thumb {
  flex: 1;
  display: grid;
  place-items: center;
  background: linear-gradient(#fbf9f0, #efe9ca 50%, #efe9ca 70%, #ddd5b2);
  border: solid #c4bc9a;
  border-width: 0 2px;
}
.thumb i { width: 7px; height: 7px; border-radius: 2px; background: linear-gradient(135deg, #b3ab8c, #f7f3e0); }
.rest { width: 10px; background: #fbfaf3; border-right: 2px solid #c4bc9a; }

.taskbar { height: 31px; padding: 1px 0 0 1px; }
.taskbar button {
  display: flex;
  align-items: center;
  gap: 6px;
  width: 256px;
  height: 28px;
  padding-left: 2px;
  border: 1px solid var(--line);
  background: #b2cbe5;
}

.status { display: flex; gap: 5px; height: 27px; }
.status > * {
  padding: 0 4px;
  border: 1px solid #d8d1b0;
  border-bottom: 0;
  line-height: 27px;
}
.status .hint { flex: 1; }
.status .off { color: #b09448; }
.status button { display: flex; align-items: center; gap: 3px; }
```
